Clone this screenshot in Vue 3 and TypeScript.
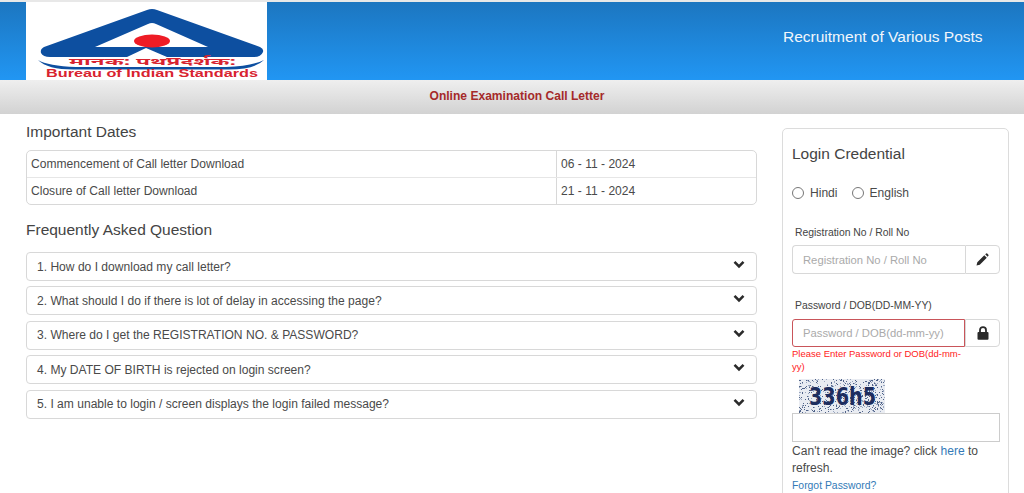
<script setup lang="ts">
const dates = [
  { label: 'Commencement of Call letter Download', value: '06 - 11 - 2024' },
  { label: 'Closure of Call letter Download', value: '21 - 11 - 2024' },
]
const faqs = [
  '1. How do I download my call letter?',
  '2. What should I do if there is lot of delay in accessing the page?',
  '3. Where do I get the REGISTRATION NO. & PASSWORD?',
  '4. My DATE OF BIRTH is rejected on login screen?',
  '5. I am unable to login / screen displays the login failed message?',
]
let seed = 7
const rnd = () => {
  seed = (seed * 16807) % 2147483647
  return seed / 2147483647
}
const noise = Array.from({ length: 620 }, () => ({
  x: Math.floor(rnd() * 86),
  y: Math.floor(rnd() * 34),
  c: rnd() > 0.45 ? '#4f6288' : '#9aa7c0',
}))
</script>

<template>
  <div class="page">
    <header class="top">
      <div class="logo">
        <svg width="241" height="78" viewBox="0 0 241 78">
          <path d="M121 8 Q126 6 131 8 L234 45 Q238 47 237 50 Q235 55 228 55 L141 55 L120 46 L101 55 L24 55 Q17 55 15 51 Q14 47 18 45 Z M122 22 L69 45 L182 45 L130 22 Q126 20 122 22 Z" fill="#0d4fa0" fill-rule="evenodd" />
          <ellipse cx="126" cy="39" rx="18" ry="6.5" fill="#ee1c25" />
          <path d="M12 58 Q22 64 50 65 L200 65 Q226 64 238 58 Q228 68 200 67.500 L50 67.500 Q22 68 12 58 Z" fill="#0d4fa0" />
          <text class="hi" x="43" y="63" textLength="167" lengthAdjust="spacingAndGlyphs">मानक: पथप्रदर्शक:</text>
          <text class="en" x="20" y="75" textLength="212" lengthAdjust="spacingAndGlyphs">Bureau of Indian Standards</text>
        </svg>
      </div>
      <div class="recruit">Recruitment of Various Posts</div>
    </header>
    <div class="subbar">Online Examination Call Letter</div>

    <main class="content">
      <section class="left">
        <h4 class="heading first">Important Dates</h4>
        <div class="dates">
          <div v-for="d in dates" :key="d.label" class="date-row">
            <div class="date-label">{{ d.label }}</div>
            <div class="date-value">{{ d.value }}</div>
          </div>
        </div>
        <h4 class="heading second">Frequently Asked Question</h4>
        <div class="faqs">
          <div v-for="q in faqs" :key="q" class="faq">
            <span>{{ q }}</span>
            <svg class="chev" width="12" height="9" viewBox="0 0 12 9">
              <path d="M1.500 1.800 L6 6.300 L10.500 1.800" fill="none" stroke="#2b2b2b" stroke-width="2.600" />
            </svg>
          </div>
        </div>
      </section>

      <aside class="card">
        <h4 class="card-title">Login Credential</h4>
        <div class="radios">
          <label class="radio"><span class="dot"></span>Hindi</label>
          <label class="radio"><span class="dot"></span>English</label>
        </div>
        <div class="field-label reg">Registration No / Roll No</div>
        <div class="group reg-group">
          <div class="input ph">Registration No / Roll No</div>
          <div class="addon">
            <svg width="13" height="13" viewBox="0 0 13 13">
              <path d="M0.500 12.500 L1.300 9.200 L8.300 2.200 L10.800 4.700 L3.800 11.700 Z M9.200 1.300 L10.200 0.500 Q10.700 0.200 11.200 0.600 L12.400 1.800 Q12.800 2.300 12.400 2.800 L11.600 3.800 Z" fill="#2b2b2b" />
            </svg>
          </div>
        </div>
        <div class="field-label pass">Password / DOB(DD-MM-YY)</div>
        <div class="group pass-group">
          <div class="input ph invalid">Password / DOB(dd-mm-yy)</div>
          <div class="addon">
            <svg width="12" height="14" viewBox="0 0 12 14">
              <path d="M1.500 6 L10.500 6 Q11.500 6 11.500 7 L11.500 12.800 Q11.500 13.800 10.500 13.800 L1.500 13.800 Q0.500 13.800 0.500 12.800 L0.500 7 Q0.500 6 1.500 6 Z" fill="#2b2b2b" />
              <path d="M3 6.500 L3 4 Q3 1.200 6 1.200 Q9 1.200 9 4 L9 6.500" fill="none" stroke="#2b2b2b" stroke-width="1.800" />
            </svg>
          </div>
        </div>
        <div class="error">Please Enter Password or DOB(dd-mm-yy)</div>
        <svg class="captcha" width="86" height="34" viewBox="0 0 86 34">
          <rect width="86" height="34" fill="#e9ecf2" />
          <rect v-for="(n, i) in noise" :key="i" :x="n.x" :y="n.y" width="1" height="1" :fill="n.c" />
          <text class="cap-text" x="10" y="26" textLength="67" lengthAdjust="spacingAndGlyphs">336h5</text>
        </svg>
        <div class="captcha-input"></div>
        <p class="refresh">Can't read the image? click <a class="link">here</a> to refresh.</p>
        <a class="forgot">Forgot Password?</a>
      </aside>
    </main>
  </div>
</template>

<style>
html, body { margin: 0; overflow: hidden; background: #fff; }
</style>

<style scoped>
.page {
  width: 1024px;
  height: 493px;
  overflow: hidden;
  font-family: "Liberation Sans", Arial, sans-serif;
  color: #4a4a4a;
  font-size: 12.070px;
}
.top {
  height: 78px;
  border-top: 2px solid #e8e8e8;
  background: linear-gradient(#1c76c0, #2196f3);
  display: flex;
  align-items: stretch;
  padding-left: 26px;
}
.logo { width: 241px; height: 78px; background: #fff; flex: none; }
.logo svg { display: block; }
.hi { font-family: "Noto Sans", "DejaVu Sans", sans-serif; font-size: 10px; font-weight: 700; fill: #d8232f; }
.en { font-size: 10.500px; font-weight: 700; fill: #d8232f; }
.recruit {
  margin-left: auto;
  width: 241px;
  flex: none;
  color: #f2f6fb;
  font-size: 15.500px;
  line-height: 70px;
}
.subbar {
  height: 34px;
  line-height: 32px;
  text-align: center;
  background: linear-gradient(#efefef, #d2d2d2);
  color: #a52a2a;
  font-weight: 700;
  font-size: 12.070px;
  padding-left: 10px;
  box-sizing: border-box;
}
.content {
  display: flex;
  align-items: flex-start;
  padding: 0 15px 0 26px;
}
.left { width: 731px; flex: none; }
.heading { margin: 0; font-weight: 400; font-size: 15.500px; line-height: 18px; color: #444; }
.heading.first { margin-top: 9px; }
.heading.second { margin-top: 16px; }
.dates {
  margin-top: 9px;
  border: 1px solid #d8d8d8;
  border-radius: 5px;
}
.date-row { display: flex; height: 26px; line-height: 26px; }
.date-row + .date-row { border-top: 1px solid #e6e6e6; }
.date-label { width: 525px; padding-left: 4px; border-right: 1px solid #d8d8d8; flex: none; }
.date-value { padding-left: 4px; }
.faqs { margin-top: 13px; display: flex; flex-direction: column; gap: 5.400px; }
.faq {
  height: 29px;
  box-sizing: border-box;
  border: 1px solid #d8d8d8;
  border-radius: 4px;
  display: flex;
  align-items: center;
  justify-content: space-between;
  padding: 0 11px 0 10px;
}
.chev { position: relative; top: -2px; }
.card {
  margin-left: 25px;
  width: 227px;
  height: 400px;
  flex: none;
  box-sizing: border-box;
  margin-top: 14px;
  border: 1px solid #dcdcdc;
  border-radius: 5px;
  padding: 0 9px;
}
.card-title { margin: 16px 0 0; font-weight: 400; font-size: 15.500px; line-height: 18px; color: #444; }
.radios { display: flex; gap: 14px; margin-top: 23px; line-height: 14px; }
.radio { display: flex; align-items: center; gap: 6px; }
.dot { width: 10px; height: 10px; border: 1px solid #777; border-radius: 50%; display: block; }
.field-label { font-size: 10.400px; padding-left: 3px; line-height: 12px; color: #444; }
.reg { margin-top: 27px; }
.pass { margin-top: 26px; }
.group { display: flex; width: 208px; }
.reg-group { margin-top: 6px; height: 29px; }
.pass-group { margin-top: 7px; height: 28px; }
.input {
  width: 173px;
  box-sizing: border-box;
  border: 1px solid #d8d8d8;
  border-right: none;
  border-radius: 4px 0 0 4px;
  padding-left: 10px;
  line-height: 28px;
  font-size: 11.250px;
  color: #aaa;
}
.input.invalid { border: 1px solid #c9555a; border-radius: 3px 0 0 3px; line-height: 27px; }
.addon {
  flex: 1;
  border: 1px solid #d8d8d8;
  border-radius: 0 4px 4px 0;
  display: flex;
  align-items: center;
  justify-content: center;
}
.error { width: 175px; color: #f22; font-size: 9.500px; line-height: 13px; }
.captcha { display: block; margin: 6px 0 0 7px; }
.cap-text { font-family: "DejaVu Sans", sans-serif; font-weight: 700; font-size: 24.500px; fill: #1d2d5e; }
.captcha-input { width: 208px; height: 29px; box-sizing: border-box; border: 1px solid #ccc; }
.refresh { margin: 1px 0 0; line-height: 17px; width: 208px; color: #4a4a4a; }
.link { color: #337ab7; }
.forgot { display: block; color: #337ab7; font-size: 10.400px; margin-top: 3px; line-height: 12px; }
</style>
